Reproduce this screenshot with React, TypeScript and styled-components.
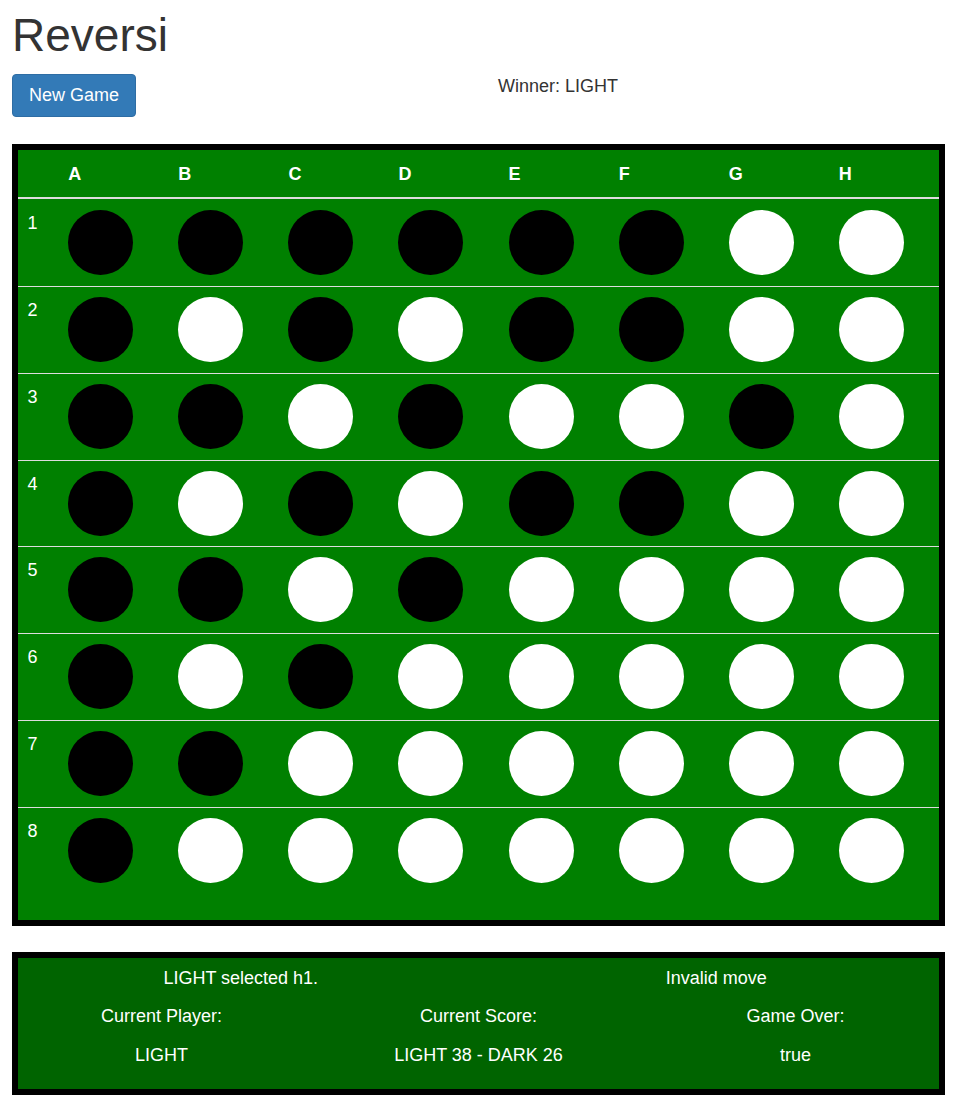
import React from "react";
import styled, { createGlobalStyle } from "styled-components";

const GlobalStyle = createGlobalStyle`
  html, body { margin: 0; padding: 0; background: #fff; }
  body {
    font-family: "Liberation Sans", Arial, Helvetica, sans-serif;
    font-size: 18px;
    line-height: 26px;
    color: #333;
  }
  * { box-sizing: border-box; }
`;

const Page = styled.div`
  padding: 0 12px 23px;
`;

const Title = styled.h1`
  margin: 10px 0 13.4px;
  font-size: 46px;
  line-height: 1.1;
  font-weight: 400;
  color: #333;
`;

const Toolbar = styled.div`
  display: grid;
  grid-template-columns: 159px 1fr;
  align-items: start;
`;

const Button = styled.button`
  justify-self: start;
  font-family: inherit;
  font-size: 18px;
  line-height: 25px;
  padding: 8px 16px;
  color: #fff;
  background: #337ab7;
  border: 1px solid #2e6da4;
  border-radius: 4px;
  cursor: pointer;
`;

const Winner = styled.div`
  text-align: center;
  line-height: 25px;
`;

const Board = styled.div`
  margin-top: 27px;
  border: 6px solid #000;
  background: #008000;
  padding-bottom: 26px;
  color: #fff;
  overflow: hidden;
`;

const Grid = styled.div`
  display: grid;
  grid-template-columns: 42.2px repeat(8, 110.1px);
`;

const HeaderRow = styled(Grid)`
  height: 49px;
  padding-top: 11px;
  border-bottom: 2px solid #ddd;
`;

const HeadCell = styled.div`
  padding-left: 8px;
  font-weight: 700;
`;

const Row = styled(Grid)`
  border-top: 1px solid #ddd;
  padding: 10px 0 10.86px;
  &:first-child {
    border-top: 0;
    padding-top: 11px;
  }
`;

const RowNum = styled.div`
  padding-left: 9.5px;
  line-height: 26px;
`;

const Cell = styled.div`
  padding-left: 8px;
`;

const Disc = styled.div<{ $light: boolean }>`
  width: 65px;
  height: 65px;
  border-radius: 50%;
  background: ${(p) => (p.$light ? "#fff" : "#000")};
`;

const Status = styled.div`
  margin-top: 26px;
  border: 6px solid #000;
  background: #006400;
  color: #fff;
  padding: 7px 0 21px;
`;

const StatusRow = styled.div<{ $cols: number }>`
  display: grid;
  grid-template-columns: repeat(${(p) => p.$cols}, 1fr);
  margin: 0 -15px 12.5px;
  &:last-child { margin-bottom: 0; }
`;

const StatusItem = styled.div`
  text-align: center;
  line-height: 26px;
`;

const board = [
  "BBBBBBWW",
  "BWBWBBWW",
  "BBWBWWBW",
  "BWBWBBWW",
  "BBWBWWWW",
  "BWBWWWWW",
  "BBWWWWWW",
  "BWWWWWWW",
];

const letters = ["A", "B", "C", "D", "E", "F", "G", "H"];

export default function App() {
  return (
    <Page>
      <GlobalStyle />
      <Title>Reversi</Title>
      <Toolbar>
        <Button>New Game</Button>
        <Winner>Winner: LIGHT</Winner>
      </Toolbar>
      <Board>
        <HeaderRow>
          <HeadCell />
          {letters.map((l) => (
            <HeadCell key={l}>{l}</HeadCell>
          ))}
        </HeaderRow>
        <div>
          {board.map((row, r) => (
            <Row key={r}>
              <RowNum>{r + 1}</RowNum>
              {row.split("").map((c, i) => (
                <Cell key={i}>
                  <Disc $light={c === "W"} />
                </Cell>
              ))}
            </Row>
          ))}
        </div>
      </Board>
      <Status>
        <StatusRow $cols={2}>
          <StatusItem>LIGHT selected h1.</StatusItem>
          <StatusItem>Invalid move</StatusItem>
        </StatusRow>
        <StatusRow $cols={3}>
          <StatusItem>Current Player:</StatusItem>
          <StatusItem>Current Score:</StatusItem>
          <StatusItem>Game Over:</StatusItem>
        </StatusRow>
        <StatusRow $cols={3}>
          <StatusItem>LIGHT</StatusItem>
          <StatusItem>LIGHT 38 - DARK 26</StatusItem>
          <StatusItem>true</StatusItem>
        </StatusRow>
      </Status>
    </Page>
  );
}
